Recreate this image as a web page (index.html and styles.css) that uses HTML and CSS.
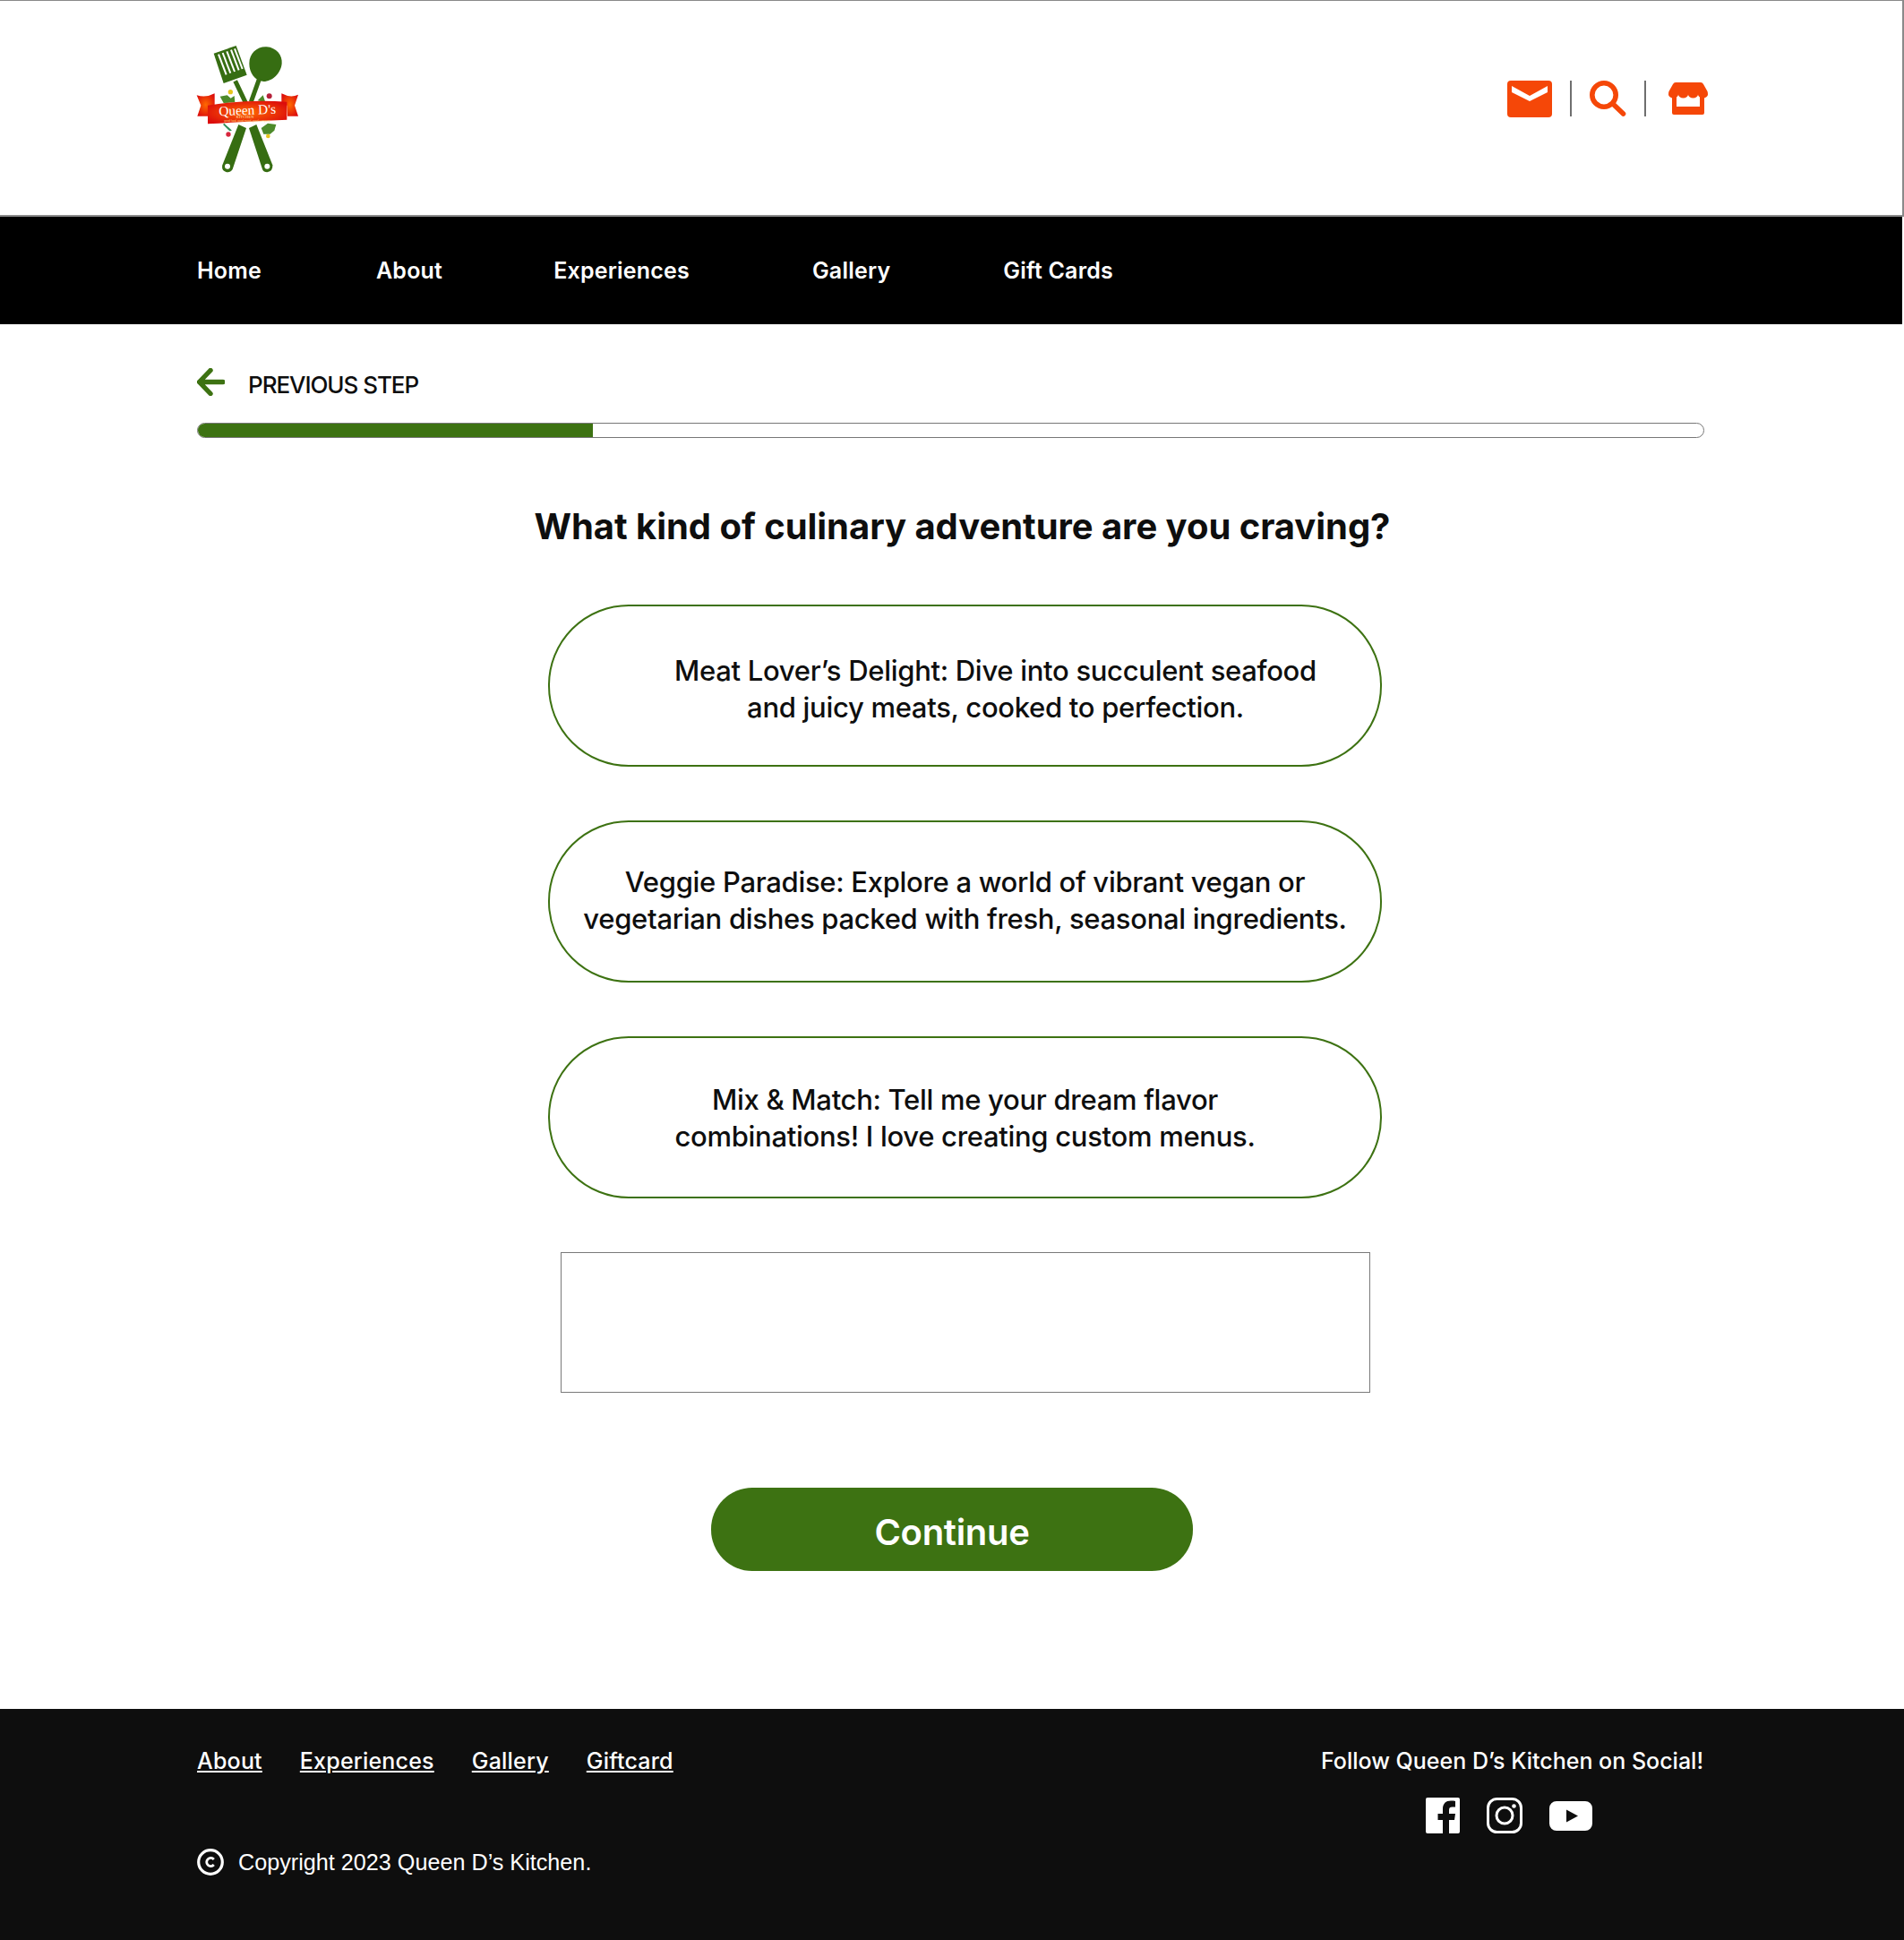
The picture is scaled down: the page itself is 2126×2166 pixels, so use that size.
FILE: index.html
```html
<!DOCTYPE html>
<html>
<head>
    <title>Queen D's Kitchen</title>
    <link rel="stylesheet" href="styles.css">
</head>
<body>
    <header class="site-header">
        <svg class="logo" viewBox="50 50 360 450" width="120" height="150">
            <defs>
                <radialGradient id="ribbon" cx="50%" cy="50%" r="60%">
                    <stop offset="0" stop-color="#ff6a00"/>
                    <stop offset="1" stop-color="#dc0c0c"/>
                </radialGradient>
            </defs>
            <!-- spatula -->
            <path d="M115 88 190 62 226 160 148 188Z" fill="#366d12"/>
            <g stroke="#fff" stroke-width="6">
                <path d="M131 91 157 159"/>
                <path d="M145 86 171 154"/>
                <path d="M159 81 185 149"/>
                <path d="M173 76 199 144"/>
                <path d="M185 72 211 140"/>
            </g>
            <path d="M187 180 226 262" stroke="#366d12" stroke-width="15" fill="none"/>
            <path d="M233 338 258 326 312 462Q314 482 294 486 282 486 278 476Z" fill="#366d12"/>
            <circle cx="294" cy="466" r="9" fill="#fff"/>
            <!-- spoon -->
            <path d="M234 122C234 86 262 64 292 66 324 68 346 94 343 122 340 154 312 182 282 182 252 180 234 152 234 122Z" fill="#366d12"/>
            <path d="M268 172 240 250" stroke="#366d12" stroke-width="15" fill="none"/>
            <path d="M198 326 224 338 178 476Q170 488 156 485 140 480 144 462Z" fill="#366d12"/>
            <circle cx="161" cy="466" r="9" fill="#fff"/>
            <!-- leaves and vegetables -->
            <path d="M136 232 160 228 172 238 184 230 186 252 148 254Z" fill="#4d8a2a"/>
            <path d="M262 246 280 228 288 252Z" fill="#4d8a2a"/>
            <path d="M274 338 296 322 324 326 318 346 304 358 282 358Z" fill="#4d8a2a"/>
            <path d="M150 322 176 346 168 348 146 326Z" fill="#2f8f5a"/>
            <circle cx="171" cy="217" r="8" fill="#e7c51d"/>
            <circle cx="301" cy="231" r="9" fill="#b5213a"/>
            <circle cx="164" cy="359" r="8" fill="#d7263d"/>
            <circle cx="297" cy="365" r="7" fill="#e7c51d"/>
            <!-- ribbon -->
            <path d="M58 228Q88 238 118 222V264L96 268 95 298H60L72 262Z" fill="url(#ribbon)"/>
            <path d="M342 222Q372 238 398 226L386 262 398 298H362L360 262 342 258Z" fill="url(#ribbon)"/>
            <path d="M95 262Q230 240 360 250V310Q230 316 95 324Z" fill="url(#ribbon)"/>
            <text x="132" y="293" class="logo-name" transform="rotate(-2 230 280)">Queen D's</text>
            <text x="190" y="304" class="logo-sub">KITCHEN</text>
            <text x="150" y="317" class="logo-tag">good food, good mood, good company</text>
        </svg>
        <div class="header-icons">
            <svg class="icon-mail" viewBox="0 0 50 41" width="50" height="41">
                <rect width="50" height="41" rx="4" fill="#f54708"/>
                <path d="M5 6 25 17 45 6V13L25 23 5 13Z" fill="#fff"/>
            </svg>
            <span class="sep sep-first"></span>
            <svg class="icon-search" viewBox="0 0 41 40" width="41" height="40">
                <circle cx="16" cy="16" r="13.2" fill="none" stroke="#f54708" stroke-width="5.6"/>
                <path d="M26 26 37.5 37" stroke="#f54708" stroke-width="5.6" stroke-linecap="round"/>
            </svg>
            <span class="sep sep-second"></span>
            <svg class="icon-store" viewBox="0 0 44 36" width="44" height="36">
                <path d="M4 14H9V27H35V14H40V34a2 2 0 0 1-2 2H6a2 2 0 0 1-2-2Z" fill="#f54708"/>
                <path d="M8 0H36Q38 0 39 2L43.500 10Q44 11 44 13.500a5.500 4 0 0 1-11 0 5.500 4 0 0 1-11 0 5.500 4 0 0 1-11 0 5.500 4 0 0 1-11 0Q0 11 .5 10L5 2Q6 0 8 0Z" fill="#f54708"/>
            </svg>
        </div>
    </header>

    <nav class="main-nav">
        <a href="#" class="nav-home">Home</a>
        <a href="#" class="nav-about">About</a>
        <a href="#" class="nav-exp">Experiences</a>
        <a href="#" class="nav-gallery">Gallery</a>
        <a href="#">Gift Cards</a>
    </nav>

    <main class="content">
        <a href="#" class="prev-step">
            <svg viewBox="0 0 31 31" width="31" height="31">
                <path d="M29 15.500H3M15 2.500 2.500 15.500 15 28.500" fill="none" stroke="#3d7212" stroke-width="5.400" stroke-linecap="round" stroke-linejoin="round"/>
            </svg>
            <span>PREVIOUS STEP</span>
        </a>
        <div class="progress"><div class="progress-fill" style="width: 26.26%"></div></div>

        <h1 class="question">What kind of culinary adventure are you craving?</h1>

        <div class="options">
            <button class="option option-first">Meat Lover’s Delight: Dive into succulent seafood<br>and juicy meats, cooked to perfection.</button>
            <button class="option option-second">Veggie Paradise: Explore a world of vibrant vegan or<br>vegetarian dishes packed with fresh, seasonal ingredients.</button>
            <button class="option">Mix &amp; Match: Tell me your dream flavor<br>combinations! I love creating custom menus.</button>
            <textarea class="notes"></textarea>
            <button class="continue">Continue</button>
        </div>
    </main>

    <footer class="site-footer">
        <div class="footer-left">
            <div class="footer-links">
                <a href="#">About</a>
                <a href="#">Experiences</a>
                <a href="#">Gallery</a>
                <a href="#">Giftcard</a>
            </div>
            <div class="copyright">
                <svg viewBox="0 0 30 30" width="30" height="30">
                    <circle cx="15" cy="15" r="13.300" fill="none" stroke="#fff" stroke-width="3.200"/>
                    <path d="M18.800 12a4.600 4.600 0 1 0 0 6" fill="none" stroke="#fff" stroke-width="2.800"/>
                </svg>
                <span>Copyright 2023 Queen D’s Kitchen.</span>
            </div>
        </div>
        <div class="footer-right">
            <div class="follow">Follow Queen D’s Kitchen on Social!</div>
            <div class="social">
                <svg viewBox="0 0 38 40" width="38" height="40">
                    <path d="M2 0H36a2 2 0 0 1 2 2V38a2 2 0 0 1-2 2H26V25h6l1-7h-7v-4c0-2.400 1-3.500 3.500-3.500H33V4c-1-.2-3-.4-5-.4-5.500 0-9 3.300-9 9V18h-5.500v7H19v15H2a2 2 0 0 1-2-2V2a2 2 0 0 1 2-2Z" fill="#fff"/>
                </svg>
                <svg viewBox="0 0 40 40" width="40" height="40">
                    <rect x="1.500" y="1.500" width="37" height="37" rx="10" fill="none" stroke="#fff" stroke-width="3"/>
                    <circle cx="20" cy="20" r="9" fill="none" stroke="#fff" stroke-width="3"/>
                    <circle cx="30.500" cy="9.500" r="2.300" fill="#fff"/>
                </svg>
                <svg viewBox="0 0 48 33" width="48" height="33">
                    <path d="M8 0H40a8 8 0 0 1 8 8V25a8 8 0 0 1-8 8H8a8 8 0 0 1-8-8V8a8 8 0 0 1 8-8ZM19 9.500V23.500L32 16.500Z" fill="#fff" fill-rule="evenodd"/>
                </svg>
            </div>
        </div>
    </footer>
</body>
</html>
```

FILE: styles.css
```css
* {
    box-sizing: border-box;
}
body {
    margin: 0;
    background-color: white;
    font-family: "Inter", "Liberation Sans", sans-serif;
    color: #0e0e0e;
}
a {
    color: inherit;
    text-decoration: none;
}

/* header */
.site-header {
    display: flex;
    justify-content: space-between;
    height: 242px;
    width: 2126px;
    padding: 46px 217px 0 217px;
    border-top: 1px solid #8a8a8a;
    border-bottom: 2px solid #8a8a8a;
    border-right: 2px solid #8a8a8a;
}
.logo-name {
    font-family: "Liberation Serif", serif;
    font-size: 46px;
    fill: white;
}
.logo-sub {
    font-family: "Liberation Serif", serif;
    font-size: 12px;
    letter-spacing: 1px;
    fill: #ffe9c0;
}
.logo-tag {
    font-family: "Liberation Sans", sans-serif;
    font-size: 9px;
    fill: #ffd27a;
}
.header-icons {
    display: flex;
    align-items: flex-start;
    padding-top: 43px;
}
.sep {
    width: 2px;
    height: 40px;
    background-color: #6f6f6f;
}
.sep-first {
    margin: 0 20px 0 20px;
}
.sep-second {
    margin: 0 25px 0 20px;
}
.icon-store {
    margin-top: 2px;
}

/* nav */
.main-nav {
    display: flex;
    align-items: center;
    width: 2124px;
    height: 120px;
    padding-left: 220px;
    background-color: black;
    color: white;
    font-size: 25px;
    font-weight: 600;
    letter-spacing: 0.2px;
}
.nav-home {
    margin-right: 128px;
}
.nav-about {
    margin-right: 124px;
}
.nav-exp {
    margin-right: 137px;
}
.nav-gallery {
    margin-right: 126px;
}

/* step content */
.content {
    padding: 48px 223px 0 220px;
    height: 1546px;
}
.prev-step {
    display: flex;
    align-items: center;
    gap: 26px;
    height: 31px;
    font-size: 26px;
    font-weight: 500;
    letter-spacing: -1.05px;
}
.prev-step svg {
    margin-top: 2px;
}
.prev-step span {
    padding-top: 7px;
}
.progress {
    height: 17px;
    margin-top: 31px;
    border: 1.5px solid #777;
    border-radius: 9px;
    overflow: hidden;
}
.progress-fill {
    height: 100%;
    background-color: #3d7212;
}
.question {
    margin: 74px 0 0 0;
    padding-left: 26px;
    text-align: center;
    font-size: 40px;
    line-height: 50px;
    font-weight: 700;
    letter-spacing: -0.05px;
}
.options {
    display: flex;
    flex-direction: column;
    width: 931px;
    margin: 62px 0 0 392px;
}
.option {
    height: 181px;
    margin-bottom: 60px;
    border: 2px solid #3d7212;
    border-radius: 90px;
    background-color: white;
    color: #0e0e0e;
    font-family: inherit;
    font-size: 31px;
    line-height: 41px;
    font-weight: 500;
    letter-spacing: -0.3px;
    text-align: center;
}
.option-first {
    padding: 6px 0 0 68px;
}
.option-second {
    padding-bottom: 5px;
}
.notes {
    display: block;
    width: 904px;
    height: 157px;
    margin-left: 14px;
    border: 1px solid #7a7a7a;
    resize: none;
}
.continue {
    align-self: flex-start;
    width: 538px;
    height: 93px;
    margin: 106px 0 0 182px;
    padding-top: 6px;
    border: none;
    border-radius: 46px;
    background-color: #3d7212;
    color: white;
    font-family: inherit;
    font-size: 40px;
    font-weight: 600;
    letter-spacing: -0.3px;
}

/* footer */
.site-footer {
    display: flex;
    justify-content: space-between;
    height: 258px;
    padding: 42px 224px 0 220px;
    background-color: #0e0e0e;
    color: white;
}
.footer-links {
    display: flex;
    gap: 42px;
    font-size: 25px;
    font-weight: 500;
    line-height: 32px;
    letter-spacing: 0.2px;
}
.footer-links a {
    text-decoration: underline;
}
.copyright {
    display: flex;
    align-items: center;
    gap: 16px;
    margin-top: 82px;
    font-family: "Liberation Sans", sans-serif;
    font-size: 25.2px;
}
.footer-right {
    display: flex;
    flex-direction: column;
    align-items: flex-end;
}
.follow {
    font-size: 25px;
    font-weight: 500;
    line-height: 32px;
}
.social {
    display: flex;
    align-items: center;
    gap: 30px;
    margin: 25px 124px 0 0;
}
```
